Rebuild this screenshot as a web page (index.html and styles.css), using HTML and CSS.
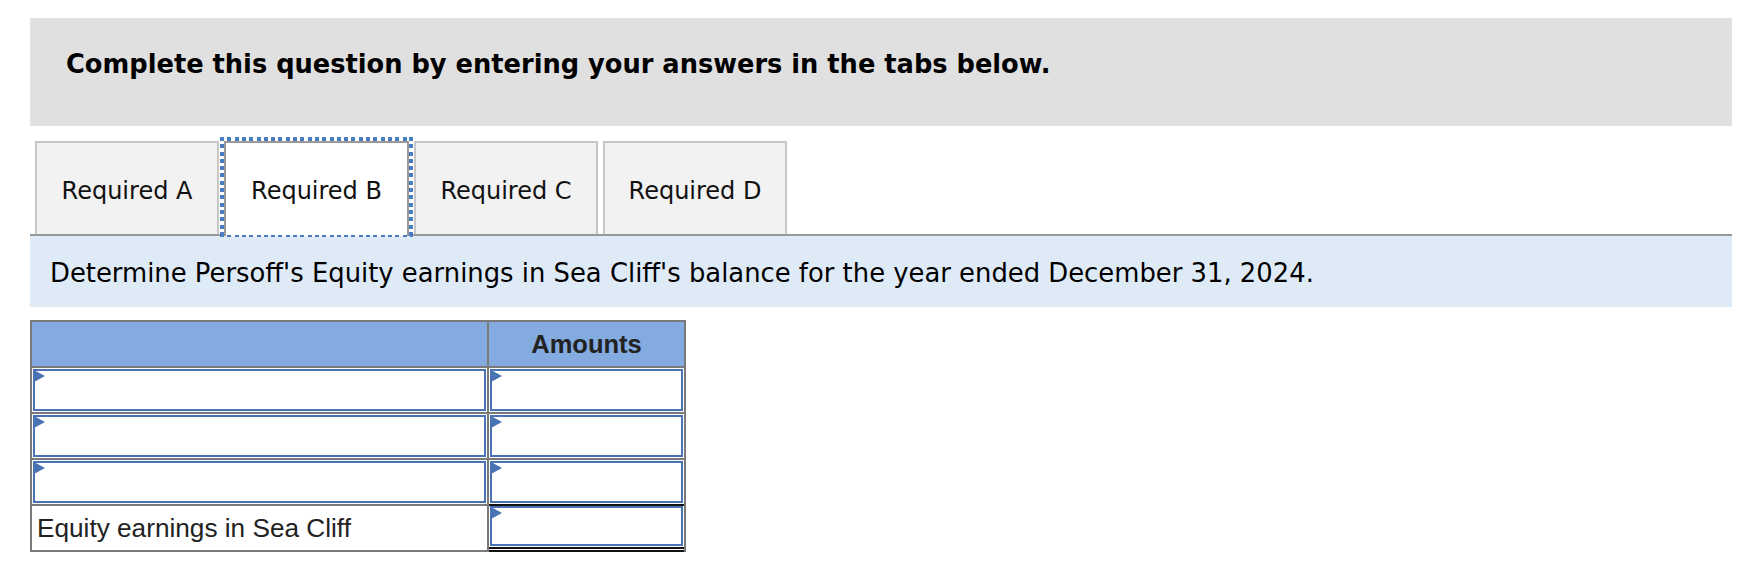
FILE: index.html
```html
<!DOCTYPE html>
<html lang="en">
<head>
<meta charset="utf-8">
<title>Required B</title>
<link rel="stylesheet" href="styles.css">
</head>
<body>
<div class="page">
  <div class="instructions">Complete this question by entering your answers in the tabs below.</div>
  <div class="tabs">
    <div class="tab">Required A</div>
    <div class="tab active">Required B</div>
    <div class="tab">Required C</div>
    <div class="tab">Required D</div>
  </div>
  <div class="prompt">Determine Persoff's Equity earnings in Sea Cliff's balance for the year ended December 31, 2024.</div>
  <div class="sheet">
    <div class="hd"></div>
    <div class="hd">Amounts</div>
    <div class="cell"><div class="field drop"></div></div>
    <div class="cell"><div class="field drop"></div></div>
    <div class="cell"><div class="field drop"></div></div>
    <div class="cell"><div class="field drop"></div></div>
    <div class="cell"><div class="field drop"></div></div>
    <div class="cell"><div class="field drop"></div></div>
    <div class="cell label">Equity earnings in Sea Cliff</div>
    <div class="cell total"><div class="field drop"></div></div>
  </div>
</div>
</body>
</html>
```
FILE: styles.css
```css
body {
  margin: 0;
  background: #fff;
}

.page {
  margin: 18px 26px 0 30px;
}

.instructions {
  height: 108px;
  box-sizing: border-box;
  background: #e0e0e0;
  padding: 31px 0 0 36px;
  font-family: "DejaVu Sans", Verdana, sans-serif;
  font-weight: bold;
  font-size: 25.7px;
  color: #000;
}

.tabs {
  display: flex;
  align-items: flex-end;
  gap: 5px;
  padding-left: 5px;
  margin-top: 15px;
}

.tab {
  width: 184px;
  height: 93px;
  box-sizing: border-box;
  border: 2px solid #c6c6c6;
  border-bottom: 0;
  background: #f2f2f2;
  display: flex;
  align-items: center;
  justify-content: center;
  padding-top: 4px;
  font-family: "DejaVu Sans", Verdana, sans-serif;
  font-size: 24px;
  color: #111;
}

.tab.active {
  width: 185px;
  height: 95px;
  margin-bottom: -2px;
  padding-top: 2px;
  background: #fff;
  border-color: #999;
  position: relative;
  z-index: 1;
}

.tab.active::after {
  content: "";
  position: absolute;
  top: -6px;
  left: -6px;
  right: -6px;
  bottom: -1px;
  background:
    repeating-linear-gradient(90deg, #4b7bc2 0 4px, transparent 4px 7.3px) left top / 100% 4px no-repeat,
    repeating-linear-gradient(90deg, #4b7bc2 0 4px, transparent 4px 7.3px) left bottom / 100% 2px no-repeat,
    repeating-linear-gradient(180deg, #4b7bc2 0 4px, transparent 4px 7.3px) left top / 4px 100% no-repeat,
    repeating-linear-gradient(180deg, #4b7bc2 0 4px, transparent 4px 7.3px) right top / 4px 100% no-repeat;
}

.prompt {
  height: 73px;
  box-sizing: border-box;
  border-top: 2px solid #999;
  background: #dfeaf7;
  padding: 22px 20px 0;
  font-family: "DejaVu Sans", Verdana, sans-serif;
  font-size: 25.85px;
  color: #000;
}

.sheet {
  margin-top: 13px;
  display: grid;
  grid-template-columns: 455px 195px;
  grid-auto-rows: 44px;
  gap: 2px;
  padding: 2px;
  width: max-content;
  background: #7a7a7a;
}

.hd {
  background: #83abdf;
  display: flex;
  align-items: center;
  justify-content: center;
  font-family: "Liberation Sans", Arial, sans-serif;
  font-weight: bold;
  font-size: 25.5px;
  color: #222;
}

.cell {
  background: #fff;
  padding: 1px;
}

.field {
  height: 100%;
  box-sizing: border-box;
  border: 2px solid #4a73b4;
  background: #fff;
  position: relative;
}

.drop::before {
  content: "";
  position: absolute;
  top: -1px;
  left: -1px;
  border-left: 11px solid #4a73b4;
  border-top: 6.5px solid transparent;
  border-bottom: 6.5px solid transparent;
}

.label {
  display: flex;
  align-items: center;
  padding: 0 0 0 5px;
  font-family: "Liberation Sans", Arial, sans-serif;
  font-size: 26.2px;
  color: #222;
}

.total {
  margin: -2px 0 -2px 0;
  border-top: 2px solid #111;
  border-bottom: 5px double #111;
  padding: 0 1px 1px 1px;
}
```
